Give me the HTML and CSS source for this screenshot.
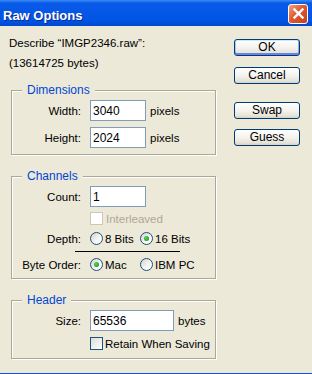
FILE: index.html
```html
<!doctype html>
<html>
<head>
	<title>Raw Options</title>
	<meta charset="utf-8"/>
	<link rel="stylesheet" href="styles.css">
</head>
<body>
	<div class="window">
		<div class="titlebar">
			<span class="title">Raw Options</span>
			<span class="close">
				<svg width="19" height="19" viewBox="0 0 19 19">
					<path d="M5.5 5.5 L13.5 13.5 M13.5 5.5 L5.5 13.5" stroke="#fff" stroke-width="2.4" stroke-linecap="square"/>
				</svg>
			</span>
		</div>

		<div class="content">
			<div class="main">
				<p class="desc">Describe “IMGP2346.raw”:<br>(13614725 bytes)</p>

				<fieldset class="group dims">
					<legend>Dimensions</legend>
					<div class="row">
						<label>Width:</label>
						<div class="field"><input class="num" type="text" value="3040"> pixels</div>
					</div>
					<div class="row">
						<label>Height:</label>
						<div class="field"><input class="num" type="text" value="2024"> pixels</div>
					</div>
				</fieldset>

				<fieldset class="group channels">
					<legend>Channels</legend>
					<div class="row">
						<label>Count:</label>
						<div class="field"><input class="num" type="text" value="1"></div>
					</div>
					<div class="row short interleave">
						<span></span>
						<div class="check-line disabled"><span class="check off"></span>Interleaved</div>
					</div>
					<div class="row short depth">
						<label>Depth:</label>
						<div class="opts">
							<div class="opt"><span class="radio"></span>8 Bits</div>
							<div class="opt"><span class="radio on"></span>16 Bits</div>
						</div>
					</div>
					<div class="rule"></div>
					<div class="row short order">
						<label>Byte Order:</label>
						<div class="opts">
							<div class="opt"><span class="radio on"></span>Mac</div>
							<div class="opt"><span class="radio"></span>IBM PC</div>
						</div>
					</div>
				</fieldset>

				<fieldset class="group header">
					<legend>Header</legend>
					<div class="row">
						<label>Size:</label>
						<div class="field"><input class="num wide" type="text" value="65536"> bytes</div>
					</div>
					<div class="row short retain">
						<span></span>
						<div class="check-line"><span class="check"></span>Retain When Saving</div>
					</div>
				</fieldset>
			</div>

			<div class="side">
				<button class="btn default">OK</button>
				<button class="btn cancel">Cancel</button>
				<button class="btn swap">Swap</button>
				<button class="btn guess">Guess</button>
			</div>
		</div>
	</div>
</body>
</html>
```

FILE: styles.css
```css
body{
	margin: 0;
	background-color: #ece9d8;
	font-family: "Liberation Sans", Arial, sans-serif;
	font-size: 11.5px;
	color: #000;
}
.window{
	height: 374px;
	box-sizing: border-box;
	border-bottom: 1px solid #0b56d8;
	display: flex;
	flex-direction: column;
}

/* title bar */
.titlebar{
	height: 26px;
	flex: none;
	display: flex;
	align-items: center;
	justify-content: space-between;
	padding: 0 4px 0 3px;
	background: linear-gradient(to bottom, #3b8cf6 0, #0a5ae8 3px, #0055e5 20px, #0049d0 26px);
}
.title{
	color: #fff;
	font-weight: bold;
	font-size: 13px;
	padding-top: 5px;
	text-shadow: 1px 1px 0 #0c2a8c;
}
.close{
	width: 20px;
	height: 20px;
	box-sizing: border-box;
	border: 1px solid #fff;
	border-radius: 3px;
	background: linear-gradient(135deg, #f0a488 0, #e0582e 45%, #c8401a 100%);
	display: flex;
	align-items: center;
	justify-content: center;
	margin-top: 1px;
}
.close svg{
	display: block;
	margin: -1px;
}

/* body */
.content{
	display: flex;
	flex: 1;
}
.main{
	width: 207px;
	padding: 7px 0 0 9px;
}
.desc{
	margin: 0;
	line-height: 20px;
}

.group{
	width: 205px;
	box-sizing: border-box;
	min-width: 0;
	margin: 14px 0 0 2px;
	padding: 3px 0 6px 0;
	border: 1px solid #aca899;
	box-shadow: inset 1px 1px 0 #fff, 1px 1px 0 #fff;
}
.dims{
	margin-top: 10px;
}
.channels{
	padding-bottom: 7px;
}
.header{
	padding-bottom: 8px;
}
legend{
	margin-left: 10px;
	padding: 0 5px;
	line-height: 14px;
	font-size: 12px;
	color: #0046d5;
	background-color: #ece9d8;
}

.row{
	display: grid;
	grid-template-columns: 69px auto;
	column-gap: 9px;
	align-items: center;
	height: 21px;
}
.row + .row{
	margin-top: 6px;
}
.row label{
	text-align: right;
}
.row.short{
	height: 13px;
}
.channels .interleave{
	margin-top: 5px;
}
.channels .depth{
	margin-top: 7px;
}
.channels .order{
	margin-top: 6px;
}
.rule{
	width: 105px;
	height: 1px;
	margin: 6px 0 0 63px;
	background-color: #000;
}

.field{
	display: flex;
	align-items: center;
	gap: 4px;
}
.num{
	width: 56px;
	height: 21px;
	box-sizing: border-box;
	border: 1px solid #7f9db9;
	padding: 0 2px;
	margin: 0;
	font: inherit;
	font-size: 12px;
	background: #fff;
	color: #000;
}
.num.wide{
	width: 84px;
}

.opts{
	display: flex;
}
.opt{
	width: 50px;
	display: flex;
	align-items: center;
	gap: 2px;
	white-space: nowrap;
}
.radio{
	flex: none;
	width: 13px;
	height: 13px;
	box-sizing: border-box;
	border: 1px solid #1c5180;
	border-radius: 50%;
	background: linear-gradient(135deg, #d4d4cd 0, #f6f6f3 60%, #fff 100%);
	position: relative;
}
.radio.on::after{
	content: "";
	position: absolute;
	left: 3px;
	top: 3px;
	width: 5px;
	height: 5px;
	border-radius: 50%;
	background: radial-gradient(circle at 40% 40%, #5fd35f 0, #21a121 70%);
}

.check-line{
	display: flex;
	align-items: center;
	gap: 2px;
	white-space: nowrap;
}
.check-line.disabled{
	gap: 3px;
	color: #aca899;
}
.check{
	flex: none;
	width: 13px;
	height: 13px;
	box-sizing: border-box;
	border: 1px solid #1c5180;
	background: linear-gradient(135deg, #dcdcd7 0, #fff 100%);
}
.check.off{
	border-color: #cac8bb;
	background: #fff;
}

/* buttons */
.side{
	display: flex;
	flex-direction: column;
	padding: 13px 0 0 18px;
}
.btn{
	width: 66px;
	height: 17px;
	box-sizing: border-box;
	padding: 0;
	border: 1px solid #003c74;
	border-radius: 3px;
	background: linear-gradient(to bottom, #fff 0, #f4f3ee 50%, #e6e3d8 85%, #d6d0c5 100%);
	font: inherit;
	font-size: 12px;
	line-height: 15px;
	color: #000;
}
.btn.default{
	box-shadow: inset 0 1px 0 #cee7ff, inset 0 -2px 0 #6982ee, inset 1px 0 0 #aac8f0, inset -1px 0 0 #8aaee8;
}
.cancel{
	margin-top: 11px;
}
.swap{
	margin-top: 18px;
}
.guess{
	margin-top: 10px;
}
```
